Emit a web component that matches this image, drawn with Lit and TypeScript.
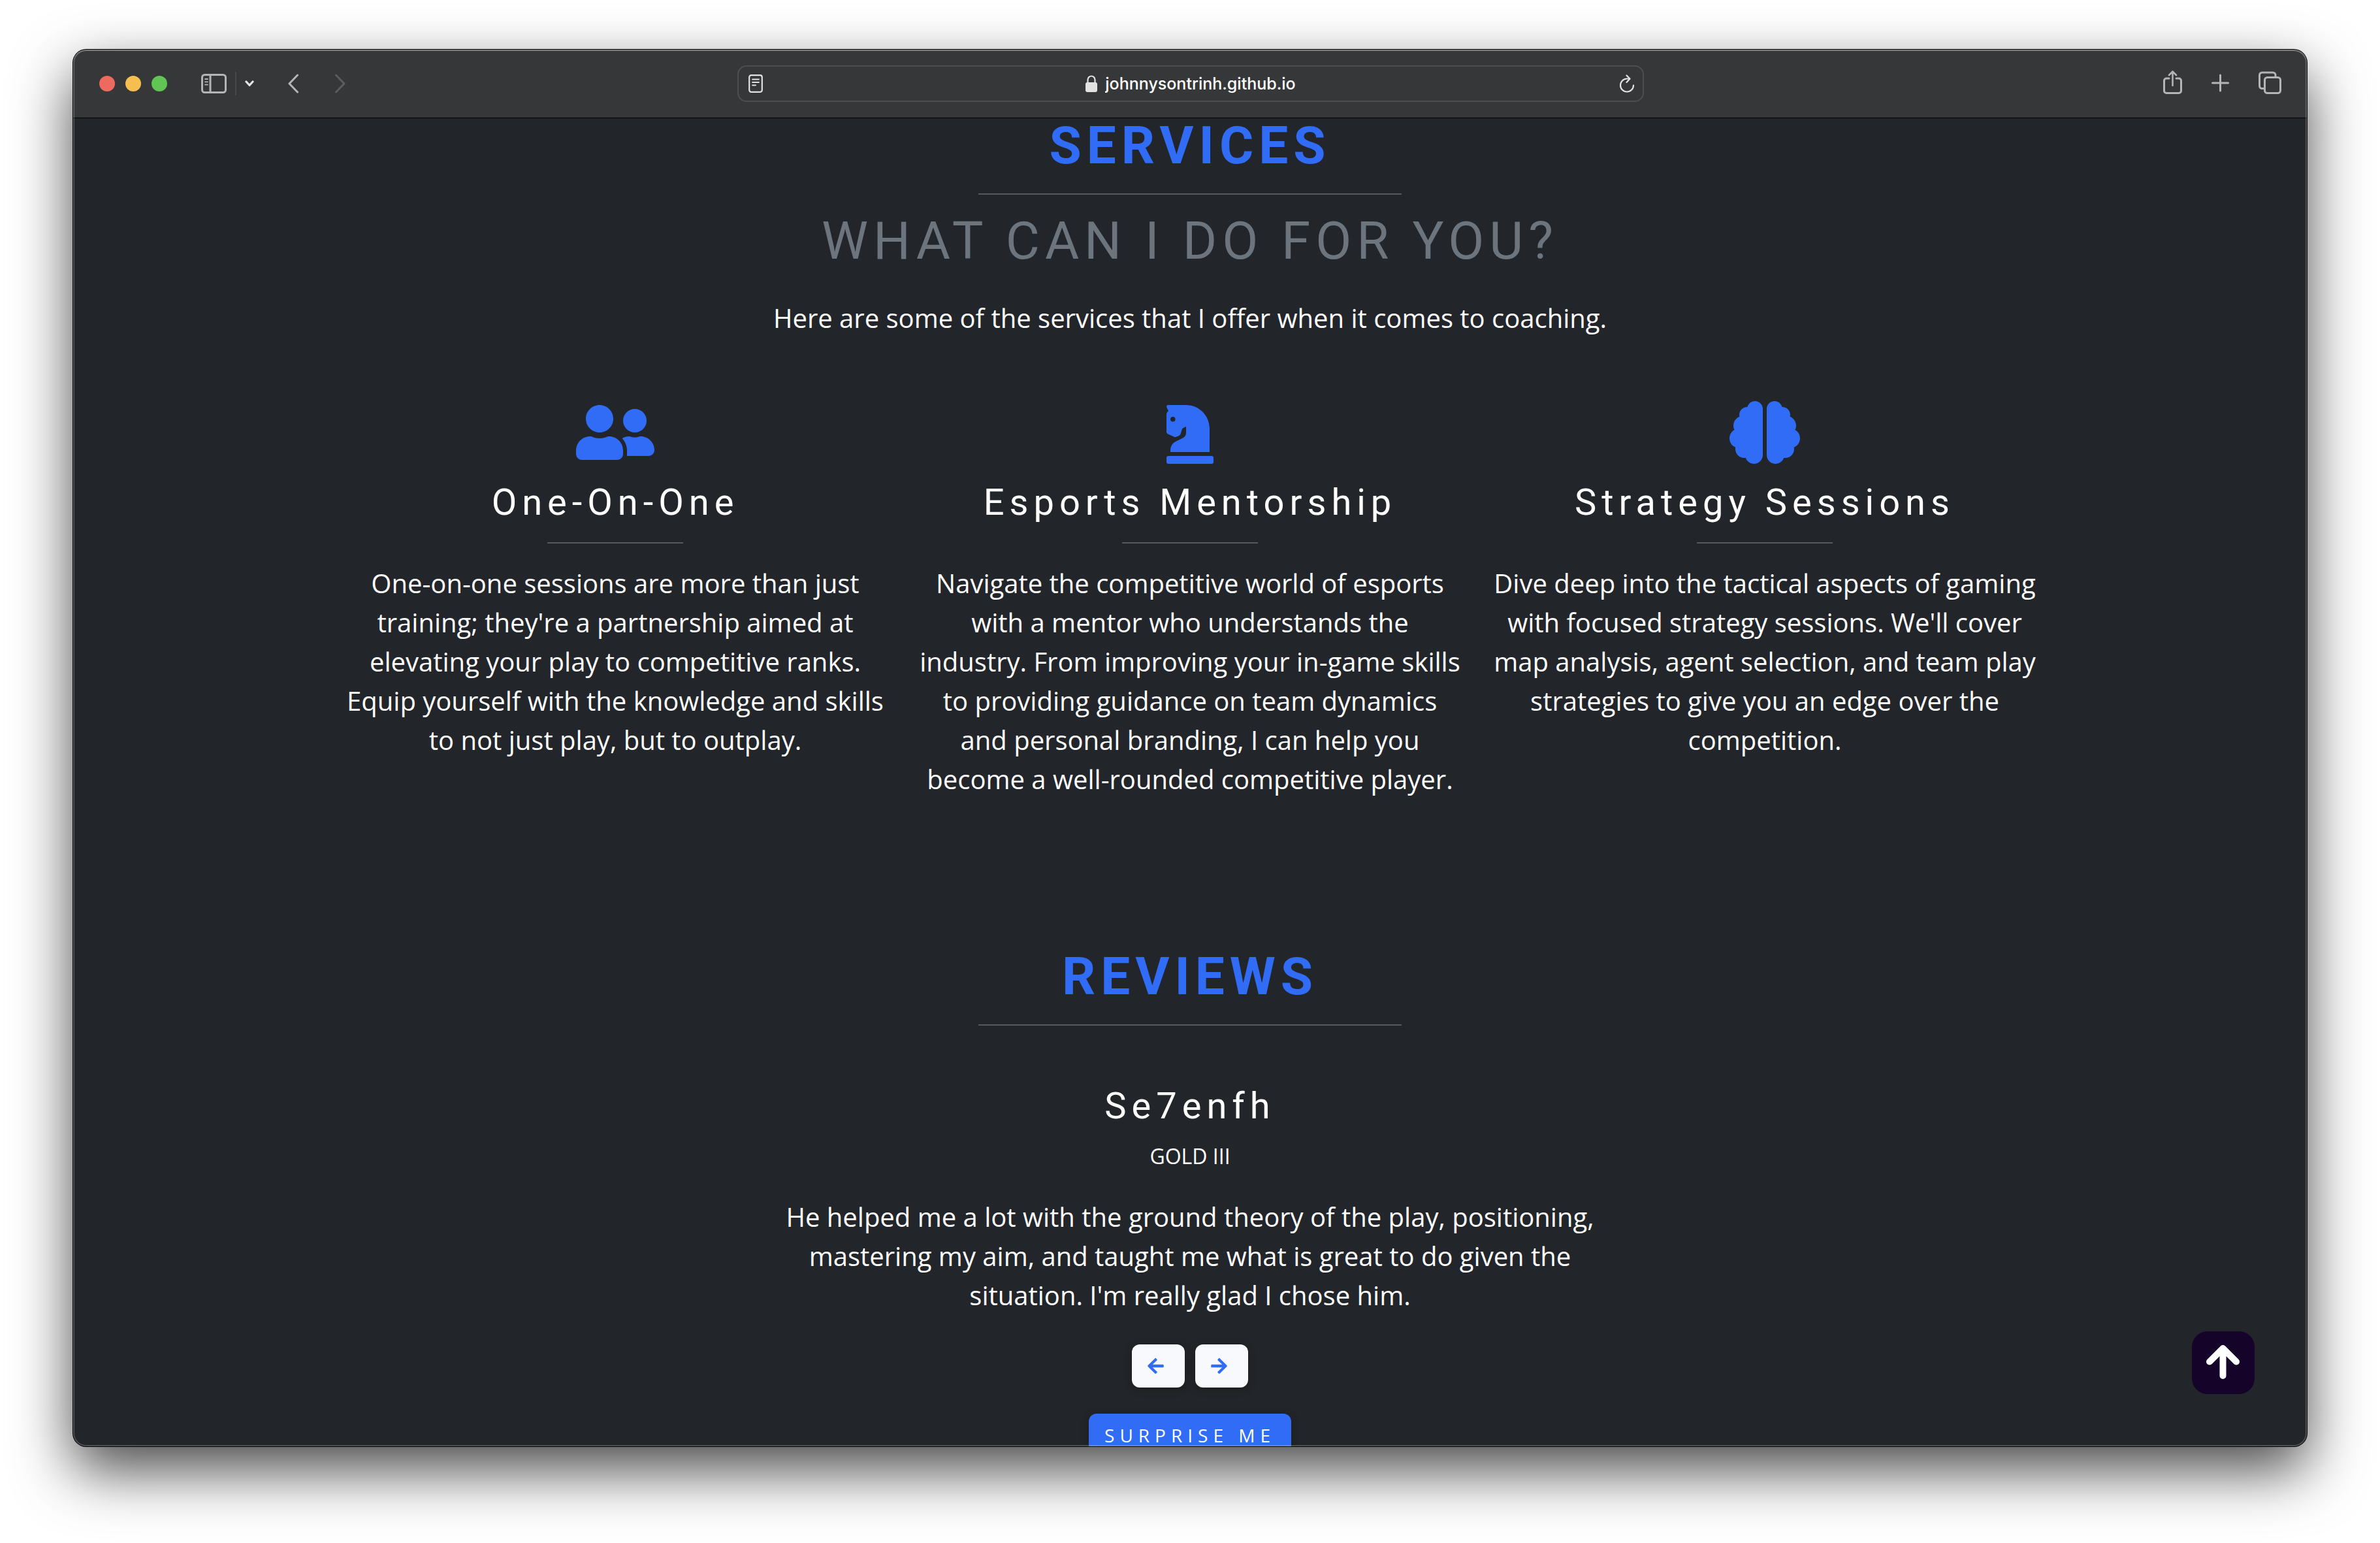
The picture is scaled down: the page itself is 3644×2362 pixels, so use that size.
import { LitElement, html, css, svg } from "lit";
import { customElement, property } from "lit/decorators.js";

interface Service {
  title: string;
  text: string;
  viewBox: string;
  width: number;
  path: string;
}

const SERVICES: Service[] = [
  {
    title: "One-On-One",
    text: "One-on-one sessions are more than just training; they're a partnership aimed at elevating your play to competitive ranks. Equip yourself with the knowledge and skills to not just play, but to outplay.",
    viewBox: "0 0 640 512",
    width: 120,
    path: "M192 256c61.9 0 112-50.1 112-112S253.9 32 192 32 80 82.1 80 144s50.1 112 112 112zm76.8 32h-8.3c-20.8 10-43.9 16-68.5 16s-47.6-6-68.5-16h-8.3C51.6 288 0 339.6 0 403.2V432c0 26.5 21.5 48 48 48h288c26.5 0 48-21.5 48-48v-28.8c0-63.6-51.6-115.2-115.2-115.2zM480 256c53 0 96-43 96-96s-43-96-96-96-96 43-96 96 43 96 96 96zm48 32h-3.8c-13.9 4.8-28.6 8-44.2 8s-30.3-3.2-44.2-8H432c-20.4 0-39.2 5.9-55.7 15.4 24.4 26.3 39.7 61.2 39.7 99.8v38.4c0 2.2-.5 4.3-.6 6.4H592c26.5 0 48-21.5 48-48 0-61.9-50.1-112-112-112z",
  },
  {
    title: "Esports Mentorship",
    text: "Navigate the competitive world of esports with a mentor who understands the industry. From improving your in-game skills to providing guidance on team dynamics and personal branding, I can help you become a well-rounded competitive player.",
    viewBox: "0 0 384 512",
    width: 72,
    path: "M19 272.47l40.63 18.06a32 32 0 0 0 24.88.47l12.78-5.12a32 32 0 0 0 18.76-20.5l9.22-30.65a24 24 0 0 1 12.55-15.65L159.94 208v50.33a48 48 0 0 1-26.53 42.94l-57.22 28.65A80 80 0 0 0 32 401.48V416h319.86V224c0-106-85.92-192-191.92-192H12A12 12 0 0 0 0 44a16.9 16.9 0 0 0 1.79 7.58L16 80l-9 9a24 24 0 0 0-7 17v137.21a24 24 0 0 0 19 29.26zM52 128a20 20 0 1 1-20 20 20 20 0 0 1 20-20zm316 320H16a16 16 0 0 0-16 16v32a16 16 0 0 0 16 16h352a16 16 0 0 0 16-16v-32a16 16 0 0 0-16-16z",
  },
  {
    title: "Strategy Sessions",
    text: "Dive deep into the tactical aspects of gaming with focused strategy sessions. We'll cover map analysis, agent selection, and team play strategies to give you an edge over the competition.",
    viewBox: "0 0 576 512",
    width: 108,
    path: "M208 0c-29.9 0-54.7 20.5-61.8 48.2-.8 0-1.4-.2-2.2-.2-35.3 0-64 28.7-64 64 0 4.8.6 9.5 1.7 14C52.5 138 32 166.6 32 200c0 12.6 3.2 24.3 8.3 34.9C16.3 248.7 0 274.3 0 304c0 33.3 20.4 61.9 49.4 73.9-.9 4.6-1.4 9.3-1.4 14.1 0 39.8 32.2 72 72 72 4.1 0 8.1-.5 12-1.2 9.6 28.5 36.2 49.2 68 49.2 39.8 0 72-32.2 72-72V64c0-35.3-28.7-64-64-64zm368 304c0-29.7-16.3-55.3-40.3-69.1 5.2-10.6 8.3-22.3 8.3-34.9 0-33.4-20.5-62-49.7-74 1-4.5 1.7-9.2 1.7-14 0-35.3-28.7-64-64-64-.8 0-1.5.2-2.2.2C422.7 20.5 397.9 0 368 0c-35.3 0-64 28.6-64 64v376c0 39.8 32.2 72 72 72 31.8 0 58.4-20.7 68-49.2 3.9.7 7.9 1.2 12 1.2 39.8 0 72-32.2 72-72 0-4.8-.5-9.5-1.4-14.1 29-12 49.4-40.6 49.4-73.9z",
  },
];

const ARROW_LEFT =
  "M257.5 445.1l-22.2 22.2c-9.4 9.4-24.6 9.4-33.9 0L7 273c-9.4-9.4-9.4-24.6 0-33.9L201.4 44.7c9.4-9.4 24.6-9.4 33.9 0l22.2 22.2c9.5 9.5 9.3 25-.4 34.3L136.6 216H424c13.3 0 24 10.7 24 24v32c0 13.3-10.7 24-24 24H136.6l120.5 114.8c9.8 9.3 10 24.8.4 34.3z";
const ARROW_RIGHT =
  "M190.5 66.9l22.2-22.2c9.4-9.4 24.6-9.4 33.9 0L441 239c9.4 9.4 9.4 24.6 0 33.9L246.6 467.3c-9.4 9.4-24.6 9.4-33.9 0l-22.2-22.2c-9.5-9.5-9.3-25 .4-34.3L311.4 296H24c-13.3 0-24-10.7-24-24v-32c0-13.3 10.7-24 24-24h287.4L190.9 101.2c-9.8-9.3-10-24.8-.4-34.3z";

@customElement("browser-toolbar")
class BrowserToolbar extends LitElement {
  @property() address = "";

  static styles = css`
    :host {
      display: block;
      flex: none;
    }
    .bar {
      box-sizing: border-box;
      height: 105px;
      padding: 0 39px 0 40px;
      display: grid;
      grid-template-columns: 1fr minmax(0, 1388px) 1fr;
      align-items: center;
      background: #363739;
      border-bottom: 1px solid #000;
      color: #b4b5b7;
    }
    .group {
      display: flex;
      align-items: center;
    }
    .end {
      justify-content: flex-end;
      gap: 45px;
    }
    .lights {
      display: flex;
      gap: 16px;
      margin-right: 52px;
    }
    .light {
      width: 24px;
      height: 24px;
      padding: 0;
      border: 0;
      border-radius: 50%;
    }
    .close {
      background: #ed6a5e;
    }
    .minimize {
      background: #f4bf4f;
    }
    .zoom {
      background: #61c554;
    }
    .tool {
      display: block;
      padding: 0;
      border: 0;
      background: none;
      color: inherit;
    }
    .tool svg,
    .field svg {
      display: block;
      fill: none;
      stroke: currentColor;
      stroke-width: 3;
      stroke-linecap: round;
      stroke-linejoin: round;
    }
    .rule {
      width: 2px;
      height: 36px;
      margin: 0 13px;
      background: #48494b;
    }
    .menu {
      color: #e6e6e7;
      margin-right: 52px;
    }
    .back {
      margin-right: 56px;
    }
    .forward {
      color: #5c5d5f;
    }
    .field {
      box-sizing: border-box;
      height: 56px;
      padding: 0 12px 0 15px;
      display: flex;
      align-items: center;
      justify-content: space-between;
      border: 2px solid #4d4e50;
      border-radius: 14px;
      color: #e2e2e3;
    }
    .site {
      display: flex;
      align-items: center;
      gap: 12px;
    }
    .address {
      field-sizing: content;
      padding: 0;
      border: 0;
      outline: 0;
      background: none;
      color: #fff;
      font: 500 25px/32px Inter, "Liberation Sans", sans-serif;
    }
  `;

  render() {
    return html`
      <header class="bar">
        <div class="group">
          <div class="lights">
            <button class="light close" aria-label="Close"></button>
            <button class="light minimize" aria-label="Minimize"></button>
            <button class="light zoom" aria-label="Zoom"></button>
          </div>
          <button class="tool" aria-label="Sidebar">
            <svg width="39" height="30" viewBox="0 0 39 30">
              <rect x="1.5" y="1.5" width="36" height="27" rx="4" />
              <path d="M14 2v26" />
              <path d="M6 8h4M6 12.300h4M6 16.600h4" stroke-width="1.800" />
            </svg>
          </button>
          <span class="rule"></span>
          <button class="tool menu" aria-label="Tab groups">
            <svg width="14" height="10" viewBox="0 0 14 10">
              <path d="M2 2l5 5.500 5-5.500" stroke-width="3.200" />
            </svg>
          </button>
          <button class="tool back" aria-label="Back">
            <svg width="16" height="30" viewBox="0 0 16 30">
              <path d="M14.500 2L2 15l12.500 13" />
            </svg>
          </button>
          <button class="tool forward" aria-label="Forward">
            <svg width="16" height="30" viewBox="0 0 16 30">
              <path d="M1.500 2L14 15 1.500 28" />
            </svg>
          </button>
        </div>

        <div class="field">
          <button class="tool" aria-label="Reader">
            <svg width="22" height="28" viewBox="0 0 22 28">
              <rect x="1.200" y="1.200" width="19.600" height="25.600" rx="3" stroke-width="2.200" />
              <path d="M6 7.500h10M6 12h10M6 16.500h5" stroke-width="1.800" />
            </svg>
          </button>
          <div class="site">
            <svg width="18" height="26" viewBox="0 0 18 26" aria-hidden="true">
              <rect x="0" y="11" width="18" height="15" rx="3" fill="currentColor" stroke="none" />
              <path d="M3.500 12V7a5.500 5.500 0 0 1 11 0v5" stroke-width="2.200" />
            </svg>
            <input class="address" aria-label="Address" .value=${this.address} />
          </div>
          <button class="tool" aria-label="Reload">
            <svg width="24" height="28" viewBox="0 0 24 28">
              <path d="M22 16.500A10 10 0 1 1 12 6.500h4" stroke-width="2.200" />
              <path d="M11.500 1.500l5 5-5 5.500" stroke-width="2.200" />
            </svg>
          </button>
        </div>

        <div class="group end">
          <button class="tool" aria-label="Share">
            <svg width="29" height="42" viewBox="0 0 29 42">
              <path d="M9 13H5a3.500 3.500 0 0 0-3.500 3.500V32A3.500 3.500 0 0 0 5 35.500h19a3.500 3.500 0 0 0 3.500-3.500V16.500A3.500 3.500 0 0 0 24 13h-4" />
              <path d="M14.500 24V2.500M9 8l5.500-5.500L20 8" stroke-width="2.600" />
            </svg>
          </button>
          <button class="tool" aria-label="New tab">
            <svg width="27" height="30" viewBox="0 0 27 30">
              <path d="M13.500 2v24M1.500 14h24" />
            </svg>
          </button>
          <button class="tool" aria-label="Tab overview">
            <svg width="35" height="38" viewBox="0 0 35 38">
              <rect x="9.500" y="9.500" width="24" height="24" rx="4" />
              <path d="M26 9V6a4 4 0 0 0-4-4H5.500a4 4 0 0 0-4 4v16.500a4 4 0 0 0 4 4H9" />
            </svg>
          </button>
        </div>
      </header>
    `;
  }
}

@customElement("service-card")
class ServiceCard extends LitElement {
  @property({ attribute: false }) service!: Service;

  static styles = css`
    :host {
      display: block;
      padding: 0 24px;
      text-align: center;
    }
    .icon {
      display: block;
      height: 96px;
      margin: 0 auto 26px;
      fill: #306cf5;
    }
    .title {
      margin: 0;
      font: 400 56px/66px Roboto, sans-serif;
      letter-spacing: 8px;
    }
    .divider {
      width: 25%;
      height: 2px;
      margin: 28px auto 31px;
      border: 0;
      background: #57595c;
    }
    .text {
      margin: 0;
      font: 400 40px/60px "Open Sans", sans-serif;
    }
  `;

  render() {
    const s = this.service;
    return html`
      <svg class="icon" width=${s.width} viewBox=${s.viewBox} aria-hidden="true">
        ${svg`<path d=${s.path}></path>`}
      </svg>
      <h3 class="title">${s.title}</h3>
      <hr class="divider" />
      <p class="text">${s.text}</p>
    `;
  }
}

@customElement("app-root")
class AppRoot extends LitElement {
  static styles = css`
    :host {
      box-sizing: border-box;
      display: flex;
      height: 100vh;
      padding: 76px 112px 148px;
      background: #fff;
      color: #fff;
    }
    .window {
      position: relative;
      flex: 1;
      min-width: 0;
      display: flex;
      flex-direction: column;
      overflow: hidden;
      border-radius: 20px;
      background: #22252a;
      box-shadow: 0 0 0 1px #000, 0 36px 90px rgba(0, 0, 0, 0.72);
    }
    .window::after {
      content: "";
      position: absolute;
      inset: 0;
      border-radius: 20px;
      box-shadow: inset 0 0 0 2px rgba(255, 255, 255, 0.2),
        inset 0 2px 1px rgba(255, 255, 255, 0.2);
      pointer-events: none;
    }
    .page {
      flex: 1;
      min-height: 0;
      overflow: hidden;
      text-align: center;
    }
    .container {
      max-width: 2640px;
      margin: 0 auto;
    }
    .section {
      display: flex;
      flex-direction: column;
      align-items: center;
      padding: 0 24px;
    }
    .heading {
      margin: 0;
      font: 700 80px/84px Roboto, sans-serif;
      letter-spacing: 8px;
      text-transform: uppercase;
      color: #306cf5;
    }
    .question {
      font-weight: 400;
      color: #6c747d;
    }
    .divider {
      width: 25%;
      height: 2px;
      margin: 31px 0 29px;
      border: 0;
      background: #57595c;
    }
    .text {
      margin: 0;
      font: 400 40px/60px "Open Sans", sans-serif;
    }
    .lead {
      margin-top: 46px;
    }
    .cards {
      display: grid;
      grid-template-columns: repeat(3, 1fr);
      margin: 97px 0 230px;
    }
    .review {
      max-width: 1272px;
      margin-top: 61px;
      display: flex;
      flex-direction: column;
      align-items: center;
    }
    .name {
      margin: 0 0 20px;
      font: 400 56px/66px Roboto, sans-serif;
      letter-spacing: 8px;
    }
    .rank {
      margin: 0 0 39px;
      font: 400 32px/48px "Open Sans", sans-serif;
    }
    .nav {
      display: flex;
      gap: 16px;
      margin: 45px 0 40px;
    }
    .button {
      box-sizing: border-box;
      height: 66px;
      padding: 0 24px;
      display: flex;
      align-items: center;
      border: 0;
      border-radius: 12px;
      background: #306cf5;
      color: #fff;
      font: 400 28px/42px "Open Sans", sans-serif;
      letter-spacing: 8px;
      text-transform: uppercase;
      box-shadow: 0 2px 10px 2px rgba(32, 30, 28, 0.9);
    }
    .arrow {
      width: 81px;
      background: #f8f9fc;
      color: #306cf5;
    }
    .arrow svg {
      display: block;
      flex: none;
      fill: currentColor;
    }
    .top {
      position: absolute;
      right: 80px;
      bottom: 80px;
      width: 96px;
      height: 96px;
      border-radius: 24px;
      background: #15032a;
      color: #fff;
    }
    .top svg {
      display: block;
      fill: none;
      stroke: currentColor;
      stroke-width: 10;
      stroke-linecap: round;
      stroke-linejoin: round;
    }
  `;

  render() {
    return html`
      <div class="window">
        <browser-toolbar address="johnnysontrinh.github.io"></browser-toolbar>
        <main class="page">
          <div class="container">
            <section class="section" id="services">
              <h2 class="heading">Services</h2>
              <hr class="divider" />
              <h2 class="heading question">What can I do for you?</h2>
              <p class="text lead">Here are some of the services that I offer when it comes to coaching.</p>
            </section>
            <div class="cards">
              ${SERVICES.map((s) => html`<service-card .service=${s}></service-card>`)}
            </div>
            <section class="section" id="reviews">
              <h2 class="heading">Reviews</h2>
              <hr class="divider" />
              <article class="review">
                <h3 class="name">Se7enfh</h3>
                <p class="rank">GOLD III</p>
                <p class="text">
                  He helped me a lot with the ground theory of the play, positioning, mastering my aim, and taught me
                  what is great to do given the situation. I'm really glad I chose him.
                </p>
                <div class="nav">
                  <button class="button arrow" aria-label="Previous review">
                    <svg width="25" height="28" viewBox="0 0 448 512"><path d=${ARROW_LEFT}></path></svg>
                  </button>
                  <button class="button arrow" aria-label="Next review">
                    <svg width="25" height="28" viewBox="0 0 448 512"><path d=${ARROW_RIGHT}></path></svg>
                  </button>
                </div>
                <button class="button">Surprise me</button>
              </article>
            </section>
          </div>
        </main>
        <a class="top" href="#services" aria-label="Back to top">
          <svg width="96" height="96" viewBox="0 0 96 96"><path d="M47.500 68V27M27 46.500L47.500 26 68 46.500"></path></svg>
        </a>
      </div>
    `;
  }
}
